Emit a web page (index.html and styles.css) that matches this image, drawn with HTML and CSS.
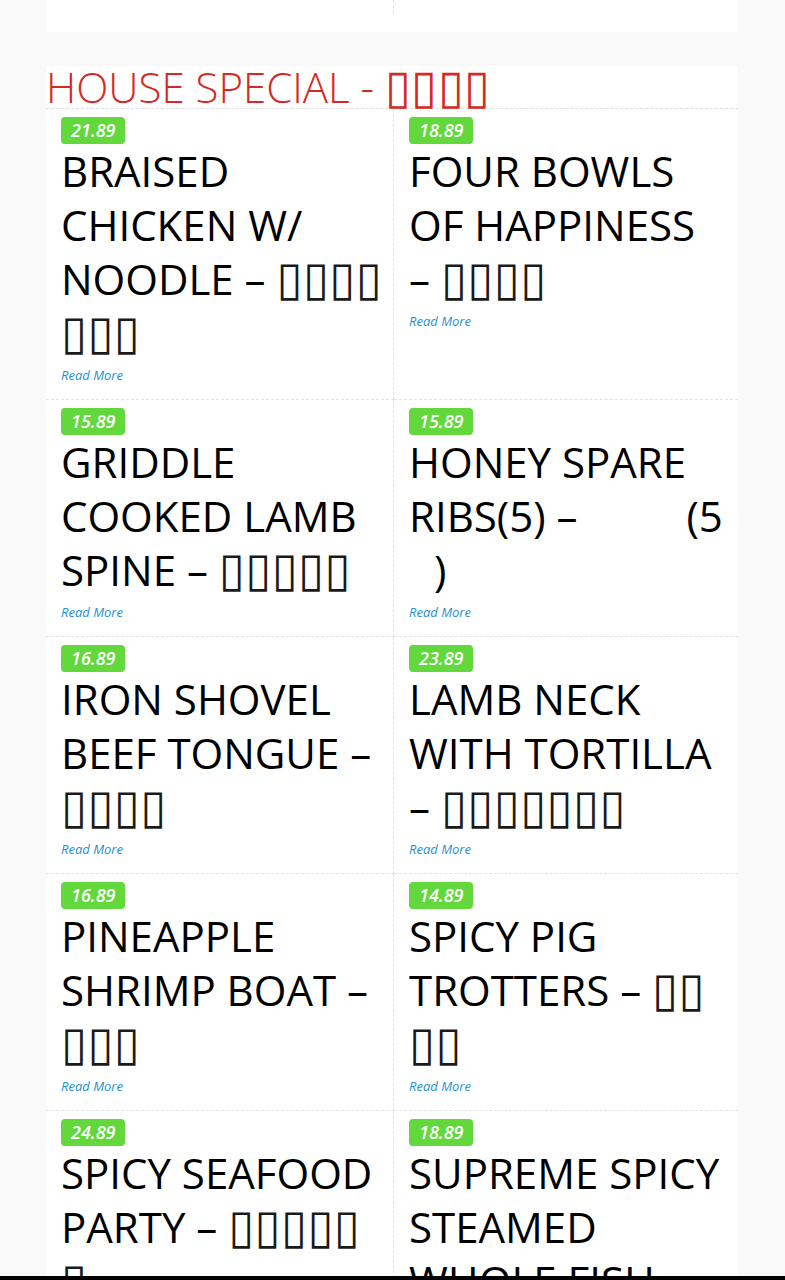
FILE: index.html
```html
<!DOCTYPE html>
<html lang="en">
<head>
<meta charset="utf-8">
<title>House Special</title>
<link rel="stylesheet" href="styles.css">
</head>
<body>
<div class="page">
  <section class="cat cat-prev">
    <div class="items tail">
      <div class="tail-cell"></div>
      <div class="tail-cell"></div>
    </div>
  </section>

  <section class="cat">
    <h2 class="cat-title">HOUSE SPECIAL - <span class="zh">▯▯▯▯</span></h2>
    <div class="items">
      <article class="item">
        <span class="price">21.89</span>
        <h3 class="name">BRAISED CHICKEN W/ NOODLE – <span class="zh">▯▯▯▯▯▯▯</span></h3>
        <a class="more" href="#">Read More</a>
      </article>
      <article class="item">
        <span class="price">18.89</span>
        <h3 class="name">FOUR BOWLS OF HAPPINESS – <span class="zh">▯▯▯▯</span></h3>
        <a class="more" href="#">Read More</a>
      </article>
      <article class="item">
        <span class="price">15.89</span>
        <h3 class="name">GRIDDLE COOKED LAMB SPINE – <span class="zh">▯▯▯▯▯</span></h3>
        <a class="more" href="#">Read More</a>
      </article>
      <article class="item">
        <span class="price">15.89</span>
        <h3 class="name">HONEY SPARE RIBS(5) – <span class="blank b4"></span>(5<span class="blank b1"></span>)</h3>
        <a class="more" href="#">Read More</a>
      </article>
      <article class="item">
        <span class="price">16.89</span>
        <h3 class="name">IRON SHOVEL BEEF TONGUE – <span class="zh">▯▯▯▯</span></h3>
        <a class="more" href="#">Read More</a>
      </article>
      <article class="item">
        <span class="price">23.89</span>
        <h3 class="name">LAMB NECK WITH TORTILLA – <span class="zh">▯▯▯▯▯▯▯</span></h3>
        <a class="more" href="#">Read More</a>
      </article>
      <article class="item">
        <span class="price">16.89</span>
        <h3 class="name">PINEAPPLE SHRIMP BOAT – <span class="zh">▯▯▯</span></h3>
        <a class="more" href="#">Read More</a>
      </article>
      <article class="item">
        <span class="price">14.89</span>
        <h3 class="name">SPICY PIG TROTTERS – <span class="zh">▯▯▯▯</span></h3>
        <a class="more" href="#">Read More</a>
      </article>
      <article class="item">
        <span class="price">24.89</span>
        <h3 class="name">SPICY SEAFOOD PARTY – <span class="zh">▯▯▯▯▯▯&nbsp;</span></h3>
        <a class="more" href="#">Read More</a>
      </article>
      <article class="item">
        <span class="price">18.89</span>
        <h3 class="name">SUPREME SPICY STEAMED WHOLE FISH – <span class="zh">▯▯▯▯▯</span></h3>
        <a class="more" href="#">Read More</a>
      </article>
    </div>
  </section>
</div>
<div class="bottom-bar"></div>
</body>
</html>
```

FILE: styles.css
```css
html, body {
  margin: 0;
  padding: 0;
}

body {
  background: #f9f9f9;
  font-family: "Open Sans", "Liberation Sans", sans-serif;
  color: #000;
}

.page {
  width: 692px;
  margin-left: 46px;
}

.cat {
  background: #fff;
  margin-bottom: 34px;
}

.cat-prev {
  padding-bottom: 18px;
}

.items {
  display: grid;
  grid-template-columns: 348px 1fr;
}

.tail {
  height: 14px;
}

.tail-cell:first-child {
  border-right: 1px dashed #e2e2e2;
}

.cat-title {
  margin: 0;
  font-size: 42px;
  line-height: 42px;
  font-weight: 300;
  color: #d42a24;
  border-bottom: 1px dashed #dedede;
  white-space: nowrap;
}

.item {
  padding: 8px 15px 14px;
  border-bottom: 1px dashed #e2e2e2;
}

.item:nth-child(odd) {
  padding-right: 9px;
  border-right: 1px dashed #e2e2e2;
}

.price {
  display: block;
  width: fit-content;
  padding: 0 10px;
  background: #62d83c;
  color: #fff;
  border-radius: 4px;
  font-size: 18px;
  line-height: 27px;
  font-style: italic;
  font-weight: 600;
}

.name {
  margin: 0;
  font-size: 42px;
  line-height: 54px;
  font-weight: 400;
  color: #000;
}

.zh {
  font-family: "DejaVu Sans", sans-serif;
  font-size: 1.13em;
  letter-spacing: 0.3px;
  line-height: 0;
  color: #1a1a1a;
  word-break: break-all;
}

.cat-title .zh {
  color: #d42a24;
}

.blank {
  display: inline-block;
}

.b4 {
  width: 98px;
}

.b1 {
  width: 25px;
}

.more {
  display: block;
  margin-top: 5px;
  font-size: 13px;
  line-height: 20px;
  font-style: italic;
  color: #1e8fd0;
  text-decoration: none;
}

.bottom-bar {
  position: fixed;
  left: 0;
  right: 0;
  bottom: 0;
  height: 4px;
  background: #000;
}
```
